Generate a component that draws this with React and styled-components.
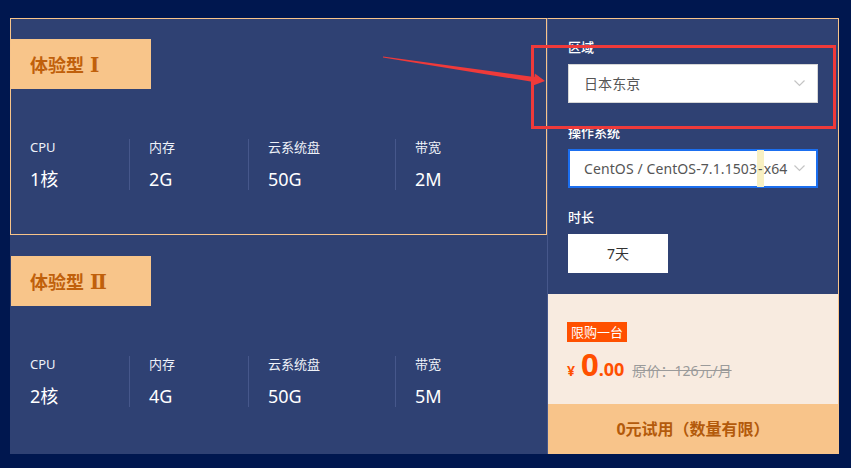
import React from 'react'
import styled, { createGlobalStyle } from 'styled-components'

const GlobalStyle = createGlobalStyle`
  html, body {
    margin: 0;
    padding: 0;
    background: #00174f;
  }
  body {
    font-family: "Noto Sans", "Noto Sans CJK SC", sans-serif;
  }
  * {
    box-sizing: border-box;
  }
`

const Stage = styled.div`
  position: relative;
  width: 851px;
  height: 468px;
  padding: 18px 0 0 10px;
`

const Board = styled.div`
  display: flex;
  width: 829px;
  height: 436px;
`

const Plans = styled.div`
  width: 537px;
  display: flex;
  flex-direction: column;
`

const PlanCard = styled.div`
  height: ${p => p.h}px;
  background: #2f4173;
  border: 1px solid ${p => (p.active ? '#f8c48a' : 'transparent')};
  padding-top: 20px;
`

const PlanTag = styled.div`
  width: 140px;
  height: 50px;
  background: #f8c58a;
  color: #c0600b;
  font-family: "Noto Sans CJK SC", sans-serif;
  font-size: 18px;
  font-weight: 700;
  line-height: 50px;
  padding-left: 19px;
`

const Numeral = styled.span`
  font-family: "DejaVu Serif", "Liberation Serif", serif;
  font-size: 20px;
  margin-left: 6px;
`

const Specs = styled.div`
  display: flex;
  margin-top: 50px;
  padding-left: 19px;
`

const Spec = styled.div`
  flex: none;
  width: ${p => p.w}px;
  height: 51px;
  color: #fff;
  & + & {
    border-left: 1px solid #46578b;
    padding-left: 19px;
  }
`

const SpecLabel = styled.div`
  font-size: 13px;
  line-height: 16px;
  color: #eef1f8;
`

const SpecValue = styled.div`
  margin-top: 13px;
  font-size: 18px;
  line-height: 22px;
`

const Side = styled.div`
  width: 292px;
  display: flex;
  flex-direction: column;
  background: #2f4173;
  border-top: 1px solid #f8c48a;
  border-right: 1px solid #f8c48a;
  border-left: 1px solid #46578b;
`

const Options = styled.div`
  flex: 1;
  padding: 19px 20px 0;
`

const Field = styled.div`
  & + & {
    margin-top: 20px;
  }
`

const FieldLabel = styled.div`
  font-size: 13px;
  line-height: 18px;
  font-weight: 500;
  color: #fff;
  margin-bottom: 8px;
`

const SelectBox = styled.div`
  display: flex;
  align-items: center;
  width: 250px;
  height: 39px;
  background: #fff;
  border: 1px solid ${p => (p.focus ? '#1b6ff0' : '#d6d6d6')};
  box-shadow: ${p => (p.focus ? 'inset 0 0 0 1px #1b6ff0' : 'none')};
  padding: 0 12px 0 15px;
`

const SelectValue = styled.span`
  flex: 1;
  overflow: hidden;
  white-space: nowrap;
  font-size: 14px;
  letter-spacing: 0.1px;
  line-height: 37px;
  color: #555;
  margin-right: 6px;
`

const Mark = styled.span`
  display: inline-block;
  vertical-align: top;
  height: 37px;
  padding: 0 1px;
  background: #f8f0c2;
`

const Duration = styled.div`
  width: 100px;
  height: 39px;
  background: #fff;
  color: #333;
  font-size: 14px;
  line-height: 39px;
  text-align: center;
`

const Offer = styled.div`
  height: 110px;
  background: #f8ebe0;
  padding: 26px 0 0 19px;
`

const Badge = styled.span`
  display: inline-block;
  width: 60px;
  height: 20px;
  background: #ff5000;
  color: #fff;
  font-size: 13px;
  line-height: 20px;
  text-align: center;
`

const PriceRow = styled.div`
  display: flex;
  align-items: baseline;
  margin-top: 2px;
  height: 40px;
  line-height: 40px;
  color: #ff5000;
  font-weight: 700;
`

const Yen = styled.span`
  font-size: 14px;
  margin-right: 6px;
`

const Whole = styled.span`
  font-size: 31px;
`

const Cents = styled.span`
  font-size: 18px;
`

const OldPrice = styled.span`
  margin-left: 8px;
  font-size: 14px;
  font-weight: 400;
  color: #9a9a9a;
  text-decoration: line-through;
`

const TryButton = styled.div`
  height: 50px;
  background: #f8c48a;
  color: #b35a0b;
  font-size: 16px;
  font-weight: 700;
  line-height: 50px;
  text-align: center;
`

const Highlight = styled.div`
  position: absolute;
  left: 531px;
  top: 45px;
  width: 305px;
  height: 84px;
  border: 3px solid #ef3a3a;
  pointer-events: none;
`

const ArrowLayer = styled.svg`
  position: absolute;
  left: 0;
  top: 0;
  pointer-events: none;
`

const Chevron = () => (
  <svg width="11" height="7" viewBox="0 0 11 7">
    <polyline points="0.5,0.5 5.5,5.5 10.5,0.5" fill="none" stroke="#c4c4c4" strokeWidth="1.2" />
  </svg>
)

const plans = [
  { name: '体验型', num: 'Ⅰ', active: true, h: 217, specs: ['1核', '2G', '50G', '2M'] },
  { name: '体验型', num: 'Ⅱ', active: false, h: 219, specs: ['2核', '4G', '50G', '5M'] }
]

const specCols = [
  { label: 'CPU', w: 99 },
  { label: '内存', w: 119 },
  { label: '云系统盘', w: 147 },
  { label: '带宽', w: 120 }
]

export default function App() {
  return (
    <Stage>
      <GlobalStyle />
      <Board>
        <Plans>
          {plans.map(plan => (
            <PlanCard key={plan.num} active={plan.active} h={plan.h}>
              <PlanTag>
                {plan.name}
                <Numeral>{plan.num}</Numeral>
              </PlanTag>
              <Specs>
                {specCols.map((col, i) => (
                  <Spec key={col.label} w={col.w}>
                    <SpecLabel>{col.label}</SpecLabel>
                    <SpecValue>{plan.specs[i]}</SpecValue>
                  </Spec>
                ))}
              </Specs>
            </PlanCard>
          ))}
        </Plans>
        <Side>
          <Options>
            <Field>
              <FieldLabel>区域</FieldLabel>
              <SelectBox>
                <SelectValue>日本东京</SelectValue>
                <Chevron />
              </SelectBox>
            </Field>
            <Field>
              <FieldLabel>操作系统</FieldLabel>
              <SelectBox focus>
                <SelectValue>
                  CentOS / CentOS-7.1.1503<Mark>-</Mark>x64
                </SelectValue>
                <Chevron />
              </SelectBox>
            </Field>
            <Field>
              <FieldLabel>时长</FieldLabel>
              <Duration>7天</Duration>
            </Field>
          </Options>
          <Offer>
            <Badge>限购一台</Badge>
            <PriceRow>
              <Yen>¥</Yen>
              <Whole>0</Whole>
              <Cents>.00</Cents>
              <OldPrice>原价：126元/月</OldPrice>
            </PriceRow>
          </Offer>
          <TryButton>0元试用（数量有限）</TryButton>
        </Side>
      </Board>
      <Highlight />
      <ArrowLayer width="851" height="468">
        <polygon
          points="383,56.5 534.4,77 534.9,73.6 545,81.1 533.1,85.4 533.6,82 383,57.5"
          fill="#ef3a3a"
        />
      </ArrowLayer>
    </Stage>
  )
}
